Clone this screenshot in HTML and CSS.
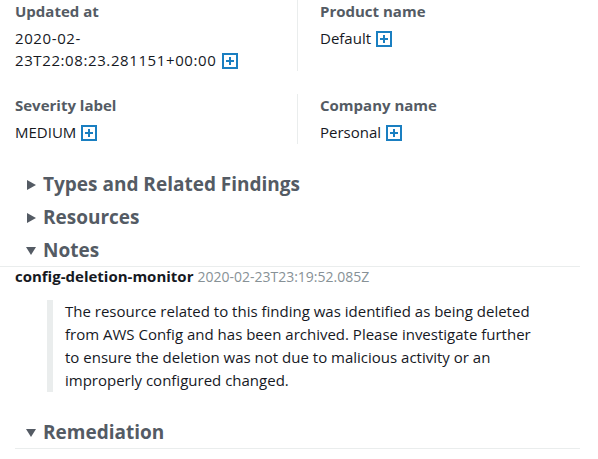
FILE: index.html
```html
<!DOCTYPE html>
<html>
<head>
<meta charset="utf-8">
<link rel="stylesheet" href="styles.css">
</head>
<body>
<div class="page">
  <div class="grid">
    <div class="cell">
      <div class="label">Updated at</div>
      <div class="value num">2020-02-<br>23T22:08:23.281151+00:00 <span class="plus"></span></div>
    </div>
    <div class="cell divided">
      <div class="label">Product name</div>
      <div class="value">Default <span class="plus"></span></div>
    </div>
    <div class="cell">
      <div class="label">Severity label</div>
      <div class="value">MEDIUM <span class="plus"></span></div>
    </div>
    <div class="cell divided">
      <div class="label">Company name</div>
      <div class="value">Personal <span class="plus"></span></div>
    </div>
  </div>

  <div class="sections">
    <div class="section"><span class="caret right"></span>Types and Related Findings</div>
    <div class="section"><span class="caret right"></span>Resources</div>
    <div class="section"><span class="caret down"></span>Notes</div>
  </div>
  <div class="rule notes-rule"></div>
  <div class="note-head"><span class="author">config-deletion-monitor</span> <span class="stamp">2020-02-23T23:19:52.085Z</span></div>
  <blockquote class="quote">The resource related to this finding was identified as being deleted from AWS Config and has been archived. Please investigate further to ensure the deletion was not due to malicious activity or an improperly configured changed.</blockquote>
  <div class="section remediation"><span class="caret down"></span>Remediation</div>
  <div class="rule"></div>
</div>
</body>
</html>
```

FILE: styles.css
```css
html, body {
  margin: 0;
  padding: 0;
  background: #fff;
}
body {
  font-family: "Open Sans", "Noto Sans", sans-serif;
  color: #16191f;
}
.page {
  padding-left: 15px;
  width: 565px;
}
.grid {
  display: grid;
  grid-template-columns: 282px 1fr;
  row-gap: 23px;
}
.cell {
  min-height: 50px;
}
.divided {
  border-left: 1px solid #eaeded;
  padding-left: 22px;
}
.label {
  font-size: 15px;
  font-weight: 700;
  color: #545b64;
  line-height: 22px;
}
.value {
  font-size: 15px;
  line-height: 22px;
  margin-top: 5px;
}
.num {
  letter-spacing: 0.6px;
}
.plus {
  display: inline-block;
  box-sizing: border-box;
  width: 16px;
  height: 16px;
  border: 2px solid #1a7fc1;
  position: relative;
  vertical-align: -3px;
  margin-left: 1px;
  letter-spacing: 0;
}
.plus::before, .plus::after {
  content: "";
  position: absolute;
  background: #1a7fc1;
}
.plus::before { left: 2px; right: 2px; top: 5px; height: 2px; }
.plus::after { top: 2px; bottom: 2px; left: 5px; width: 2px; }

.sections {
  margin-top: 28px;
  display: flex;
  flex-direction: column;
  gap: 8px;
}
.section {
  font-size: 19px;
  font-weight: 700;
  color: #545b64;
  line-height: 25px;
  padding-left: 12px;
  display: flex;
  align-items: center;
}
.caret {
  width: 0;
  height: 0;
}
.caret.right {
  border-top: 5px solid transparent;
  border-bottom: 5px solid transparent;
  border-left: 9px solid #545b64;
  margin-right: 7px;
}
.caret.down {
  border-left: 5px solid transparent;
  border-right: 5px solid transparent;
  border-top: 8px solid #545b64;
  margin-left: -1px;
  margin-right: 7px;
}
.rule {
  height: 1px;
  background: #eaeded;
}
.notes-rule {
  margin-left: -15px;
  margin-top: 3px;
}
.note-head {
  font-size: 15px;
  line-height: 18px;
}
.author {
  font-weight: 700;
}
.stamp {
  font-size: 14px;
  color: #879196;
}
.quote {
  margin: 14px 0 0 32px;
  border-left: 6px solid #eaeded;
  padding-left: 12px;
  font-size: 15px;
  line-height: 23px;
  width: 472px;
}
.remediation {
  margin-top: 28px;
  margin-bottom: 3px;
}
```
